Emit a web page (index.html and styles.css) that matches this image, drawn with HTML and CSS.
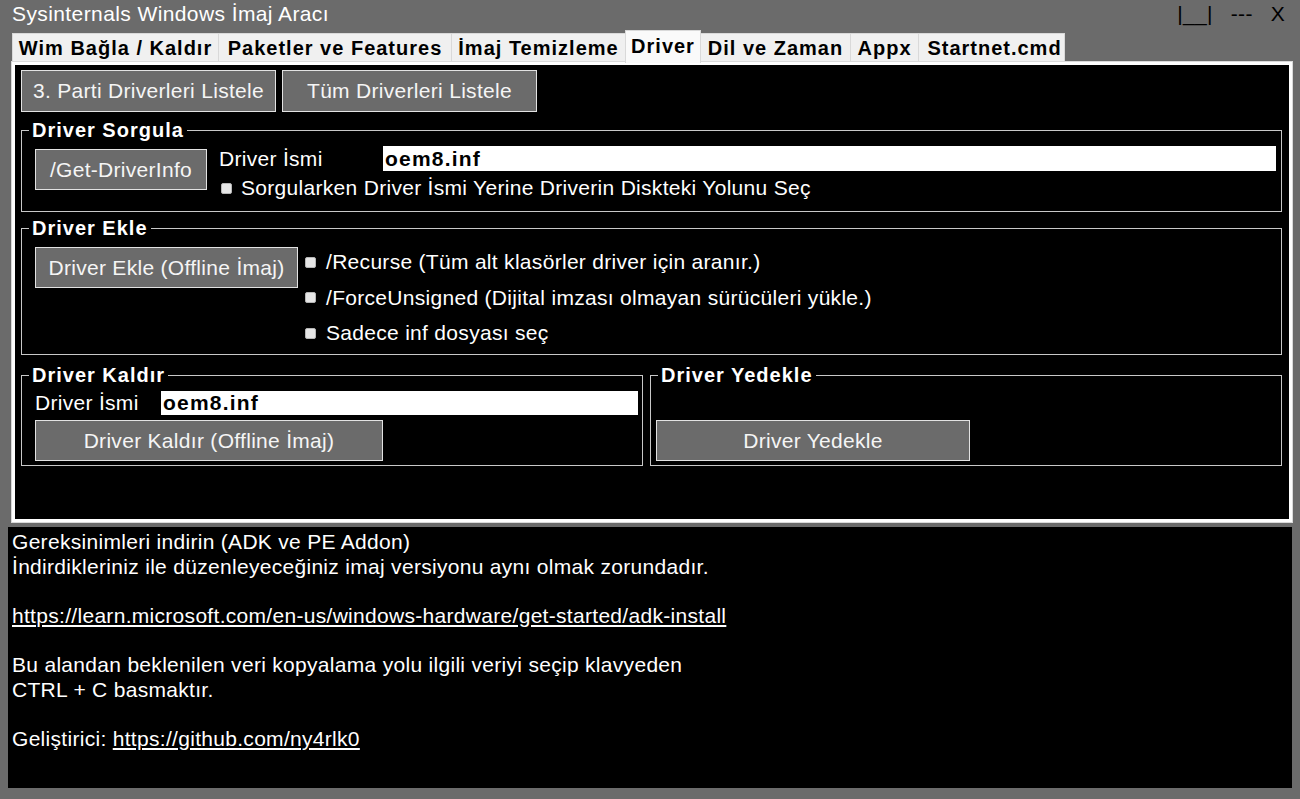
FILE: index.html
```html
<!DOCTYPE html>
<html lang="tr">
<head>
<meta charset="utf-8">
<title>Sysinternals Windows İmaj Aracı</title>
<link rel="stylesheet" href="styles.css">
</head>
<body>
<div class="window">
  <div class="titlebar">
    <span class="title">Sysinternals Windows İmaj Aracı</span>
    <div class="controls"><span>|__|</span><span>---</span><span>X</span></div>
  </div>
  <div class="tabs">
    <div class="tab t1">Wim Bağla / Kaldır</div>
    <div class="tab t2">Paketler ve Features</div>
    <div class="tab t3">İmaj Temizleme</div>
    <div class="tab t4 active">Driver</div>
    <div class="tab t5">Dil ve Zaman</div>
    <div class="tab t6">Appx</div>
    <div class="tab t7">Startnet.cmd</div>
  </div>
  <div class="panel">
    <div class="btnrow">
      <div class="btn b-list">3. Parti Driverleri Listele</div>
      <div class="btn b-list">Tüm Driverleri Listele</div>
    </div>

    <fieldset class="group g-sorgula">
      <legend>Driver Sorgula</legend>
      <div class="sorgula-body">
        <div class="btn b-info">/Get-DriverInfo</div>
        <div class="sorgula-right">
          <div class="field-row">
            <span class="lbl lbl-wide">Driver İsmi</span>
            <div class="input">oem8.inf</div>
          </div>
          <div class="check-row first-check">
            <span class="cb"></span><span class="cb-label">Sorgularken Driver İsmi Yerine Driverin Diskteki Yolunu Seç</span>
          </div>
        </div>
      </div>
    </fieldset>

    <fieldset class="group g-ekle">
      <legend>Driver Ekle</legend>
      <div class="ekle-body">
        <div class="btn b-ekle">Driver Ekle (Offline İmaj)</div>
        <div class="checks">
          <div class="check-row"><span class="cb"></span><span class="cb-label">/Recurse (Tüm alt klasörler driver için aranır.)</span></div>
          <div class="check-row"><span class="cb"></span><span class="cb-label">/ForceUnsigned (Dijital imzası olmayan sürücüleri yükle.)</span></div>
          <div class="check-row"><span class="cb"></span><span class="cb-label">Sadece inf dosyası seç</span></div>
        </div>
      </div>
    </fieldset>

    <div class="bottom-groups">
      <fieldset class="group g-kaldir">
        <legend>Driver Kaldır</legend>
        <div class="kaldir-body">
          <div class="field-row small">
            <span class="lbl lbl-narrow">Driver İsmi</span>
            <div class="input">oem8.inf</div>
          </div>
          <div class="btn b-kaldir">Driver Kaldır (Offline İmaj)</div>
        </div>
      </fieldset>
      <fieldset class="group g-yedekle">
        <legend>Driver Yedekle</legend>
        <div class="yedekle-body">
          <div class="btn b-yedekle">Driver Yedekle</div>
        </div>
      </fieldset>
    </div>
  </div>
  <div class="output">
    Gereksinimleri indirin (ADK ve PE Addon)<br>
    İndirdikleriniz ile düzenleyeceğiniz imaj versiyonu aynı olmak zorundadır.<br>
    <br>
    <span class="link">https://learn.microsoft.com/en-us/windows-hardware/get-started/adk-install</span><br>
    <br>
    Bu alandan beklenilen veri kopyalama yolu ilgili veriyi seçip klavyeden<br>
    CTRL + C basmaktır.<br>
    <br>
    Geliştirici: <span class="link">https://github.com/ny4rlk0</span>
  </div>
</div>
</body>
</html>
```

FILE: styles.css
```css
* { box-sizing: border-box; }

html, body {
  margin: 0;
  padding: 0;
}

body {
  background: #6b6b6b;
  font-family: "Liberation Sans", Arial, sans-serif;
  font-size: 21px;
  letter-spacing: 0.3px;
  color: #ffffff;
  width: 1300px;
  height: 799px;
  overflow: hidden;
}

.window {
  display: flex;
  flex-direction: column;
  width: 1300px;
  height: 799px;
}

/* title bar */
.titlebar {
  height: 30px;
  display: flex;
  justify-content: space-between;
  align-items: flex-start;
  padding: 2px 15px 0 12px;
  line-height: 24px;
}

.title { color: #ffffff; letter-spacing: 0.4px; }

.controls {
  display: flex;
  gap: 18px;
  color: #000000;
}

/* tabs */
.tabs {
  height: 32px;
  display: flex;
  align-items: flex-end;
  padding-left: 12px;
}

.tab {
  height: 29px;
  background: #f0f0f0;
  border: 1px solid #d9d9d9;
  border-bottom: none;
  border-right: none;
  color: #000000;
  font-size: 20px;
  font-weight: bold;
  letter-spacing: 1px;
  text-align: center;
  line-height: 28px;
  white-space: nowrap;
}

.t1 { width: 206px; }
.t2 { width: 233px; }
.t3 { width: 174px; }
.t4 { width: 76px; }
.t5 { width: 149px; }
.t6 { width: 68px; }
.t7 { width: 147px; border-right: 1px solid #d9d9d9; padding-left: 6px; }

.tab.active {
  height: 33px;
  margin-bottom: -1px;
  background: #fafafa;
  border-right: 1px solid #d9d9d9;
  line-height: 30px;
  position: relative;
  z-index: 1;
}

.tab.active + .tab { border-left: none; }

/* main panel */
.panel {
  margin-left: 12px;
  width: 1280px;
  height: 460px;
  background: #000000;
  border: 3px solid #ffffff;
  box-shadow: 0 0 0 1px #dadada;
  padding: 5px 7px 0 6px;
}

.btn {
  background: #6b6b6b;
  border: 1px solid #e2e2e2;
  color: #f5f5f5;
  display: flex;
  align-items: center;
  justify-content: center;
  white-space: nowrap;
}

.btnrow {
  display: flex;
  gap: 6px;
}

.b-list { width: 255px; height: 42px; }

/* group boxes */
.group {
  border: 1px solid #c8c8c8;
  margin: 0;
  padding: 0;
  min-width: 0;
}

.group legend {
  font-size: 20px;
  font-weight: bold;
  letter-spacing: 1px;
  color: #ffffff;
  padding: 0 3px;
  margin-left: 7px;
  line-height: 22px;
}

.g-sorgula { margin-top: 7px; }

.sorgula-body {
  display: flex;
  padding: 5px 5px 12px 13px;
}

.b-info {
  width: 172px;
  height: 41px;
  margin-top: 3px;
}

.sorgula-right {
  flex: 1;
  margin-left: 12px;
  display: flex;
  flex-direction: column;
}

.field-row {
  display: flex;
  align-items: center;
  height: 25px;
}

.field-row.small { height: 24px; }

.lbl { white-space: nowrap; }
.lbl-wide { width: 164px; }
.lbl-narrow { width: 126px; }

.input {
  flex: 1;
  height: 100%;
  background: #ffffff;
  color: #000000;
  font-weight: bold;
  letter-spacing: 1.2px;
  padding-left: 2px;
  display: flex;
  align-items: center;
}

.check-row {
  display: flex;
  align-items: center;
  height: 22px;
  white-space: nowrap;
}

.first-check {
  margin-top: 6px;
  padding-left: 2px;
}

.cb {
  width: 11px;
  height: 11px;
  background: #e6e6e6;
  border: 1px solid #b5b5b5;
  border-radius: 2px;
  flex: none;
}

.cb-label { margin-left: 9px; }

.g-ekle { margin-top: 5px; }

.ekle-body {
  display: flex;
  padding: 8px 5px 10px 13px;
}

.b-ekle { width: 263px; height: 41px; }

.checks {
  margin-left: 7px;
  margin-top: 4px;
  display: flex;
  flex-direction: column;
  gap: 13.5px;
}

.checks .cb-label { margin-left: 10px; }

.bottom-groups {
  display: flex;
  gap: 7px;
  margin-top: 9px;
}

.g-kaldir { width: 622px; }
.g-yedekle { flex: 1; }

.kaldir-body {
  padding: 5px 4px 4px 13px;
}

.b-kaldir {
  width: 348px;
  height: 41px;
  margin-top: 5px;
}

.yedekle-body {
  padding: 34px 5px 4px 5px;
}

.b-yedekle { width: 314px; height: 41px; }

/* output text area */
.output {
  margin-top: 5px;
  margin-left: 8px;
  width: 1284px;
  height: 261px;
  background: #000000;
  color: #ffffff;
  padding: 3px 4px;
  line-height: 24.6px;
  white-space: nowrap;
}

.link { text-decoration: underline; }
```
